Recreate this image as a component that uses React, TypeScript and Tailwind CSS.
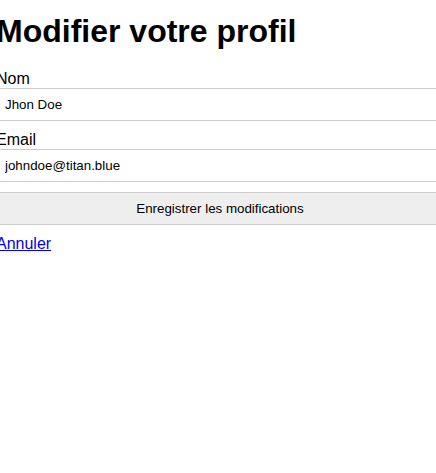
export default function App() {
  return (
    <div className="-ml-[4px] w-[calc(100%+12px)] bg-white font-['Liberation_Sans',Arial,sans-serif] text-black">
      <h1 className="pt-[12.5px] mb-[20.3px] text-[32px] font-bold leading-[36.8px]">Modifier votre profil</h1>
      <form className="flex flex-col" onSubmit={(e) => e.preventDefault()}>
        <label htmlFor="nom" className="block text-[16px] leading-[18.4px]">Nom</label>
        <input
          id="nom"
          defaultValue="Jhon Doe"
          className="block h-[33px] w-full border-y border-x-0 border-[#cccccc] bg-white pl-[9px] pr-[7px] text-[13.33px] text-black outline-none"
        />
        <label htmlFor="email" className="mt-[10px] block text-[16px] leading-[18.4px]">Email</label>
        <input
          id="email"
          defaultValue="johndoe@titan.blue"
          className="block h-[33px] w-full border-y border-x-0 border-[#cccccc] bg-white pl-[9px] pr-[7px] text-[13.33px] text-black outline-none"
        />
        <button
          type="submit"
          className="mt-[10px] block h-[33px] w-full border-y border-x-0 border-[#cccccc] bg-[#eeeeee] text-[13.33px] text-black"
        >
          Enregistrer les modifications
        </button>
      </form>
      <div className="mt-[10px] text-[16px] leading-[18.4px]">
        <a href="#" className="text-[#0000ee] underline">Annuler</a>
      </div>
    </div>
  );
}
